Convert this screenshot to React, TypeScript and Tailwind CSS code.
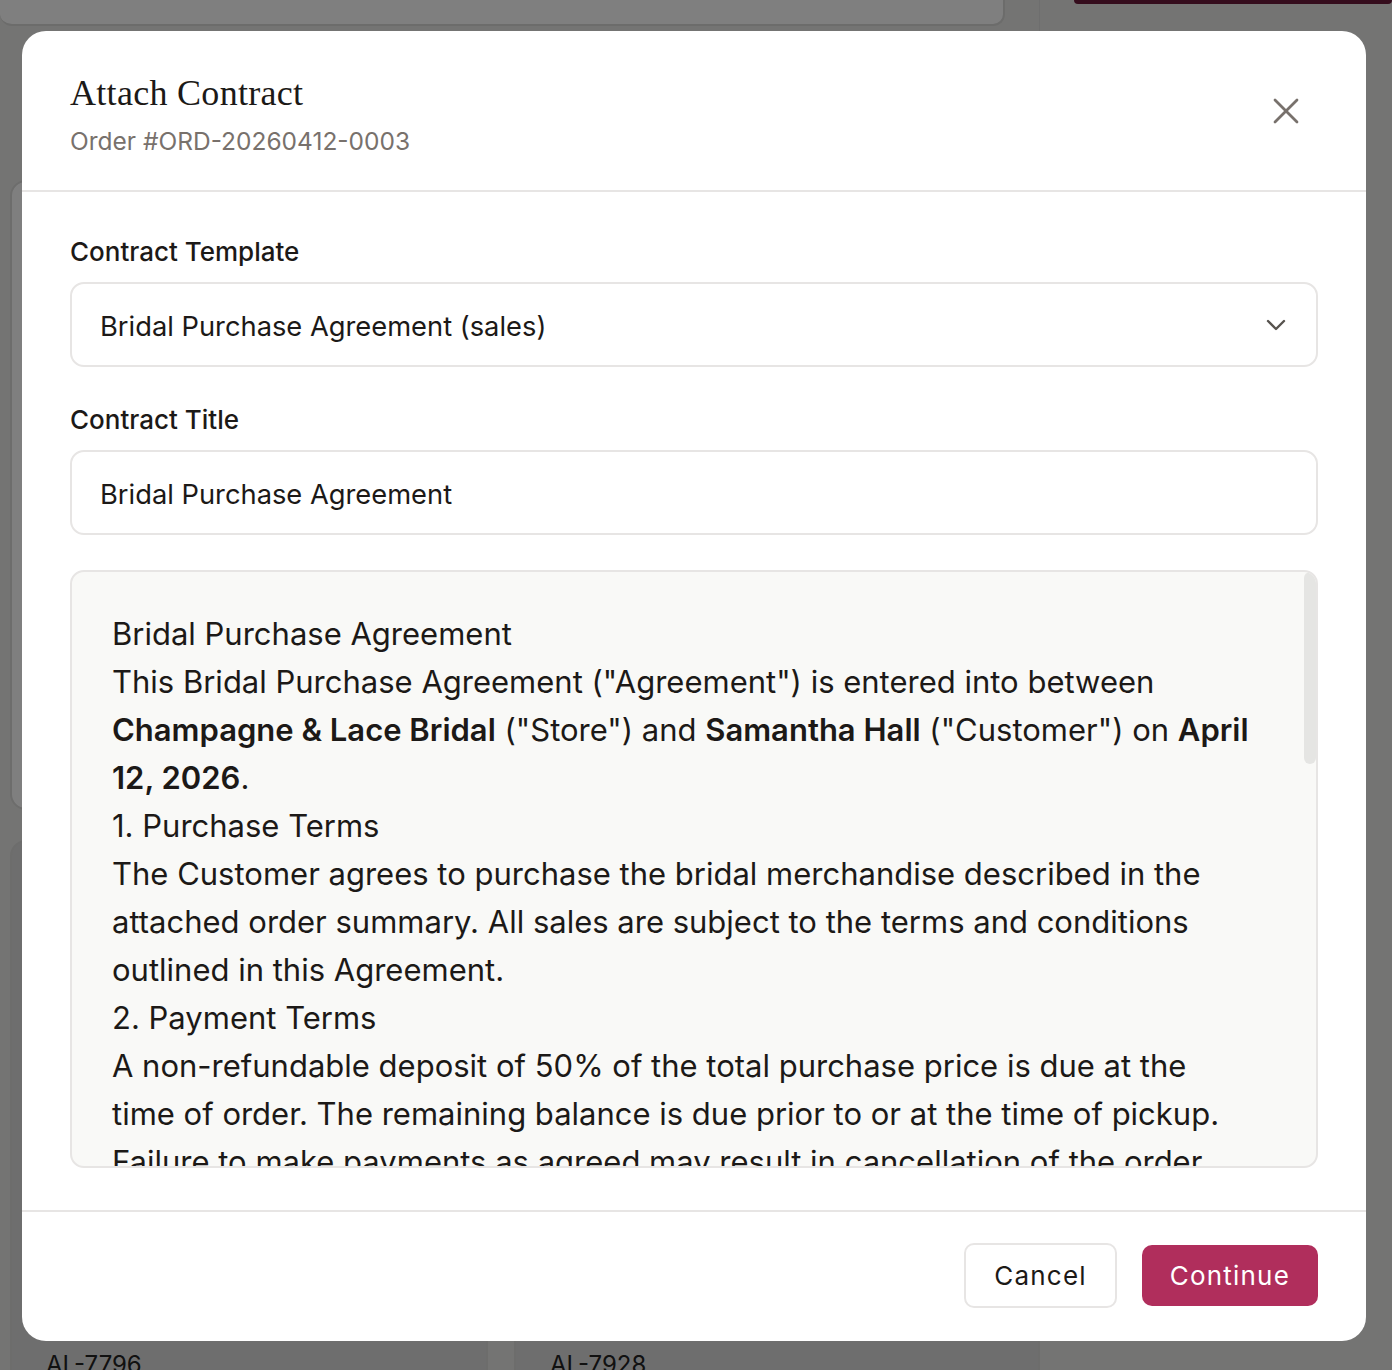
import { X, ChevronDown } from "lucide-react";

const sans = "font-['Inter','Noto_Sans',sans-serif]";

function BackgroundPage() {
  return (
    <div className="min-h-[1370px] w-full bg-[#e8e8e6]">
      <div className="flex h-[60px]">
        <div className="h-[26px] w-[1006px] rounded-b-xl border-b-2 border-r-2 border-[#d8d8d6] bg-white" />
        <div className="ml-[34px] h-[1370px] w-px bg-[#dcdcdc]" />
        <div className="ml-[34px] h-[4px] w-[318px] rounded-b bg-[#6b1a3a]" />
      </div>
      <div className="flex gap-[22px] px-[10px] pt-[120px]">
        <div className="h-[630px] w-[470px] rounded-2xl border-2 border-[#dadad8] bg-white" />
      </div>
      <div className="mt-[30px] flex gap-[26px] px-[10px]">
        <div className="h-[560px] w-[478px] rounded-2xl border-2 border-[#dadad8] bg-[#dcdcdc]">
          <div className={`${sans} pl-[34px] pt-[505px] text-[24px] text-[#222]`}>AL-7796</div>
        </div>
        <div className="h-[560px] w-[526px] rounded-2xl border-2 border-[#dadad8] bg-[#dcdcdc]">
          <div className={`${sans} pl-[34px] pt-[505px] text-[24px] text-[#222]`}>AL-7928</div>
        </div>
      </div>
    </div>
  );
}

function Field({ label, children }: { label: string; children: React.ReactNode }) {
  return (
    <div className="flex flex-col gap-[14px]">
      <label className="text-[26px] font-medium leading-[32px] text-[#1c1917]">{label}</label>
      {children}
    </div>
  );
}

const Line = ({ children }: { children: React.ReactNode }) => (
  <span className="block whitespace-nowrap">{children}</span>
);

export default function App() {
  return (
    <div className={`relative min-h-[1370px] w-full overflow-hidden ${sans}`}>
      <BackgroundPage />
      <div className="absolute inset-0 bg-black/50" />

      <div className="absolute left-[22px] top-[31px] flex h-[1310px] w-[1344px] flex-col overflow-hidden rounded-[24px] bg-white">
        <header className="flex h-[161px] shrink-0 items-start justify-between border-b-2 border-[#e7e5e4] px-[48px] pt-[40px]">
          <div className="flex flex-col">
            <h2 className="font-['Liberation_Serif','DejaVu_Serif',serif] text-[36px] leading-[44px] tracking-[0.3px] text-[#1c1917]">
              Attach Contract
            </h2>
            <p className="mt-[10px] text-[24.5px] leading-[32px] text-[#78716c]">
              Order #ORD-20260412-0003
            </p>
          </div>
          <button type="button" className="mr-[10px] mt-[18px] text-[#78716c]" aria-label="Close">
            <X className="h-[44px] w-[44px]" strokeWidth={1.5} />
          </button>
        </header>

        <div className="flex shrink-0 flex-col px-[48px] pb-[42px] pt-[44px]">
          <Field label="Contract Template">
            <div className="flex h-[85px] items-center justify-between rounded-[14px] border-2 border-[#e7e5e4] bg-white pl-[28px] pr-[24px]">
              <span className="pt-[5px] text-[27.3px] text-[#1c1917]">Bridal Purchase Agreement (sales)</span>
              <ChevronDown className="h-[32px] w-[32px] text-[#57534e]" strokeWidth={1.8} />
            </div>
          </Field>

          <div className="mt-[37px]">
            <Field label="Contract Title">
              <div className="flex h-[85px] items-center rounded-[14px] border-2 border-[#e7e5e4] bg-white px-[28px]">
                <span className="pt-[5px] text-[27.3px] text-[#1c1917]">Bridal Purchase Agreement</span>
              </div>
            </Field>
          </div>

          <div className="relative mt-[35px] h-[598px] overflow-hidden rounded-[14px] border-2 border-[#e7e5e4] bg-[#f9f9f7]">
            <div className="pl-[40px] pt-[38px] text-[31px] leading-[48px] text-[#1c1917]">
              <Line>Bridal Purchase Agreement</Line>
              <Line>This Bridal Purchase Agreement ("Agreement") is entered into between</Line>
              <Line>
                <strong className="font-semibold">Champagne &amp; Lace Bridal</strong> ("Store") and{" "}
                <strong className="font-semibold">Samantha Hall</strong> ("Customer") on{" "}
                <strong className="font-semibold">April</strong>
              </Line>
              <Line>
                <strong className="font-semibold">12, 2026</strong>.
              </Line>
              <Line>1. Purchase Terms</Line>
              <Line>The Customer agrees to purchase the bridal merchandise described in the</Line>
              <Line>attached order summary. All sales are subject to the terms and conditions</Line>
              <Line>outlined in this Agreement.</Line>
              <Line>2. Payment Terms</Line>
              <Line>A non-refundable deposit of 50% of the total purchase price is due at the</Line>
              <Line>time of order. The remaining balance is due prior to or at the time of pickup.</Line>
              <Line>Failure to make payments as agreed may result in cancellation of the order.</Line>
              <Line>3. Alterations</Line>
              <Line>Alterations are not included in the purchase price unless otherwise stated.</Line>
            </div>
            <div className="absolute right-[0px] top-0 h-[192px] w-[12px] rounded-full bg-[#e5e5e3]" />
          </div>
        </div>

        <footer className="flex flex-1 items-center justify-end gap-[25px] border-t-2 border-[#e7e5e4] px-[48px] pb-[2px]">
          <button
            type="button"
            className="h-[65px] rounded-[10px] border-2 border-[#e7e5e4] bg-white px-[28px] text-[26px] tracking-[1.2px] text-[#1c1917]"
          >
            Cancel
          </button>
          <button
            type="button"
            className="h-[61px] rounded-[10px] bg-[#b02e5c] px-[28px] text-[26px] tracking-[1.2px] text-white"
          >
            Continue
          </button>
        </footer>
      </div>
    </div>
  );
}
